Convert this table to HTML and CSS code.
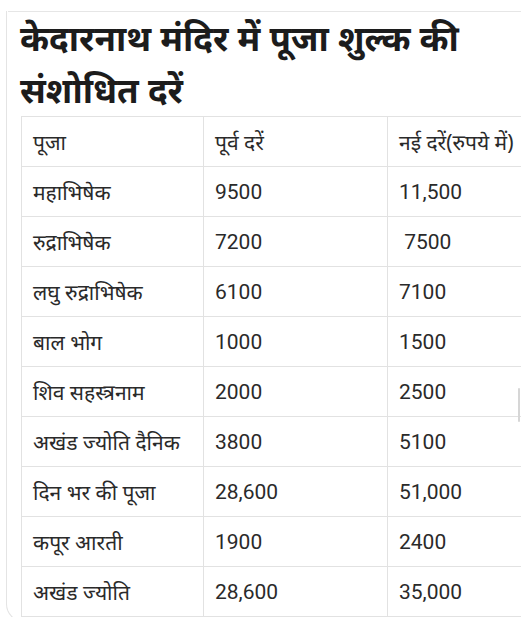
FILE: index.html
```html
<!DOCTYPE html>
<html lang="hi">
<head>
<meta charset="utf-8">
<link rel="stylesheet" href="styles.css">
</head>
<body>
<div class="page">
  <div class="card">
    <div class="rule"></div>
    <h1 class="title">केदारनाथ मंदिर में पूजा शुल्क की<br>संशोधित दरें</h1>
    <table class="rates">
      <colgroup><col class="c1"><col class="c2"><col class="c3"></colgroup>
      <tr><td>पूजा</td><td>पूर्व दरें</td><td>नई दरें(रुपये में)</td></tr>
      <tr><td>महाभिषेक</td><td class="num">9500</td><td class="num">11,500</td></tr>
      <tr><td>रुद्राभिषेक</td><td class="num">7200</td><td class="num">&nbsp;7500</td></tr>
      <tr><td>लघु रुद्राभिषेक</td><td class="num">6100</td><td class="num">7100</td></tr>
      <tr><td>बाल भोग</td><td class="num">1000</td><td class="num">1500</td></tr>
      <tr><td>शिव सहस्त्रनाम</td><td class="num">2000</td><td class="num">2500</td></tr>
      <tr><td>अखंड ज्योति दैनिक</td><td class="num">3800</td><td class="num">5100</td></tr>
      <tr><td>दिन भर की पूजा</td><td class="num">28,600</td><td class="num">51,000</td></tr>
      <tr><td>कपूर आरती</td><td class="num">1900</td><td class="num">2400</td></tr>
      <tr><td>अखंड ज्योति</td><td class="num">28,600</td><td class="num">35,000</td></tr>
    </table>
  </div>
  <div class="scroll"></div>
</div>
</body>
</html>
```
FILE: styles.css
```css
html, body {
  margin: 0;
  padding: 0;
  background: #ffffff;
  overflow: hidden;
}
.page {
  position: relative;
  width: 521px;
  height: 617px;
  overflow: hidden;
  padding-left: 6px;
  box-sizing: border-box;
}
.card {
  border-left: 1px solid #e4e4e4;
  border-bottom: 1px solid #e4e4e4;
  border-bottom-left-radius: 18px;
  height: 611px;
  box-sizing: border-box;
  width: 700px;
}
.rule {
  margin-top: 11px;
  height: 1px;
  background: #e6e6e6;
  margin-left: 1px;
}
.title {
  margin: 0;
  padding-left: 13px;
  font-family: "Noto Sans", Roboto, sans-serif;
  font-weight: bold;
  font-size: 35px;
  line-height: 52px;
  color: #1c1c1c;
  white-space: nowrap;
}
.rates {
  margin-left: 14px;
  border-collapse: collapse;
  table-layout: fixed;
  width: 600px;
  font-family: "Noto Sans", Roboto, sans-serif;
  font-size: 21px;
  color: #2a2a2a;
  background: #ffffff;
}
.c1 { width: 182px; }
.c2 { width: 184px; }
.c3 { width: 234px; }
.rates td {
  border: 1px solid #e2e2e2;
  height: 49px;
  padding: 0 0 0 11px;
  vertical-align: middle;
  white-space: nowrap;
  background: #ffffff;
}
.rates td.num {
  font-family: Roboto, "Noto Sans", sans-serif;
}
.scroll {
  position: absolute;
  right: 1px;
  top: 388px;
  width: 2px;
  height: 34px;
  background: #d6d6d6;
  border-radius: 1px;
}
```
